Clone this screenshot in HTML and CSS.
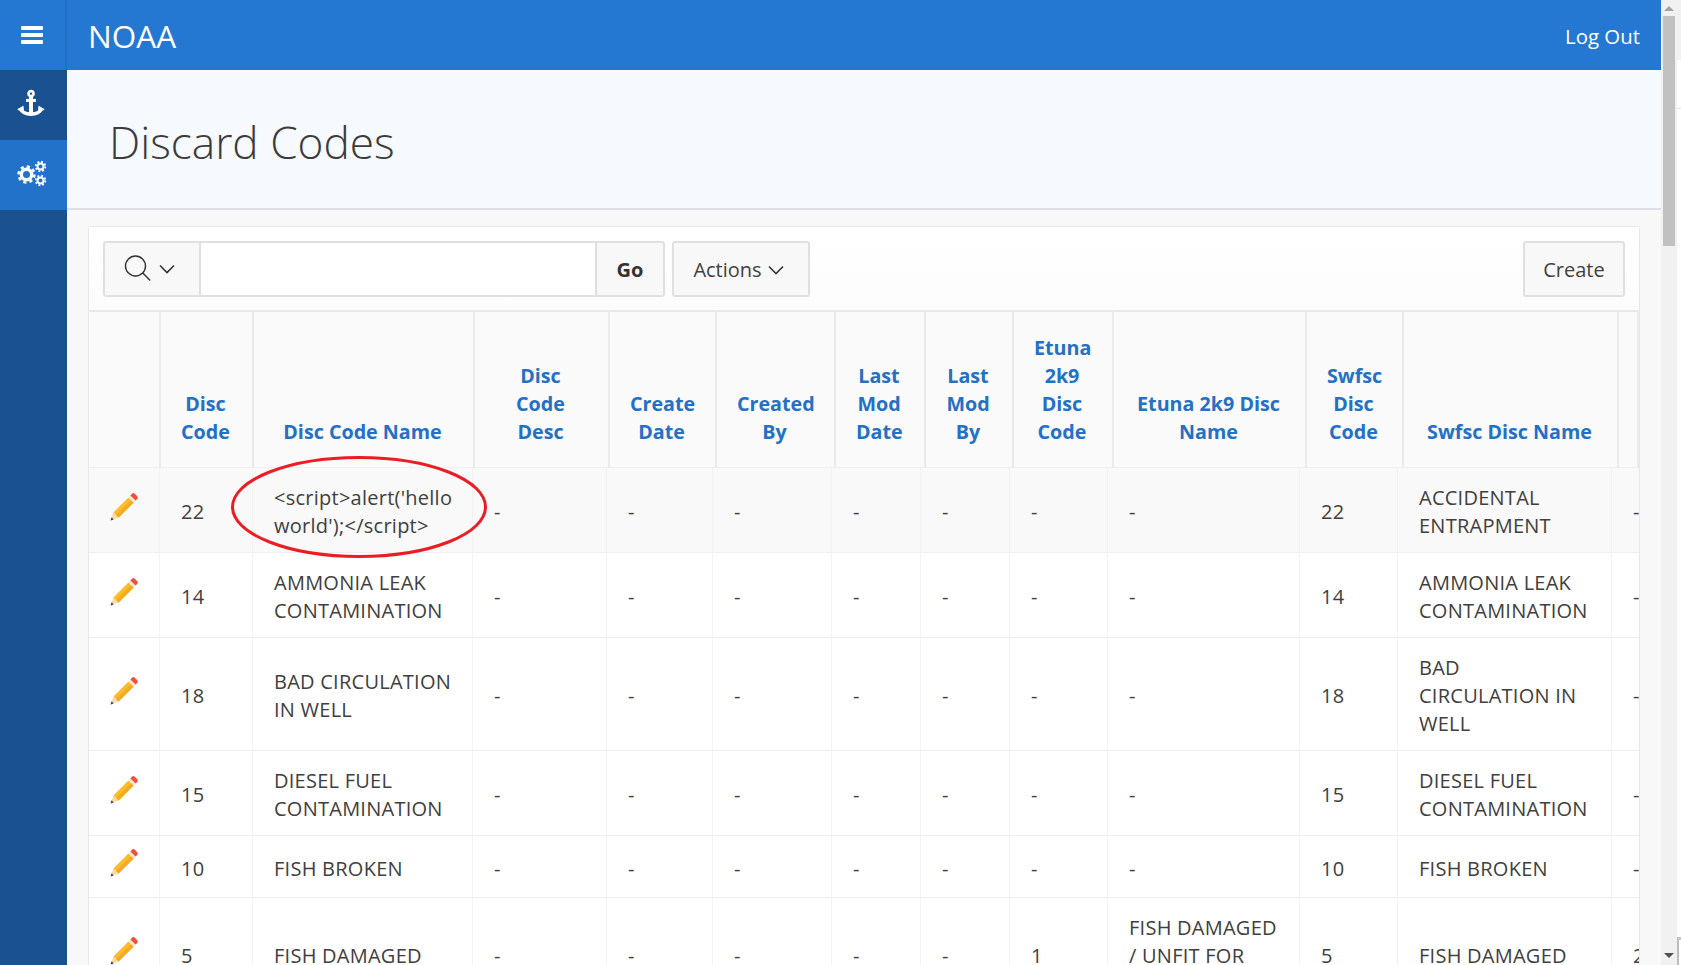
FILE: index.html
```html
<!DOCTYPE html>
<html lang="en">
<head>
<meta charset="utf-8">
<title>Discard Codes</title>
<link rel="stylesheet" href="styles.css">
</head>
<body>
<svg class="defs" width="0" height="0" aria-hidden="true">
  <symbol id="pencil" viewBox="0 0 30 30">
    <polygon points="1.5,28.5 4.4,20.4 9.6,25.6" fill="#f7dca6"/>
    <polygon points="1.5,28.5 2.6,25.3 4.7,27.4" fill="#34495e"/>
    <polygon points="4.4,20.4 19.4,5.4 24.6,10.6 9.6,25.6" fill="#fbbd2d"/>
    <polygon points="7,23 22,8 24.6,10.6 9.6,25.6" fill="#f5ab1f"/>
    <polygon points="19.4,5.4 21.4,3.4 26.6,8.6 24.6,10.6" fill="#f6e3cf"/>
    <path d="M21.4 3.4l1.6-1.6a2 2 0 0 1 2.8 0l2.4 2.4a2 2 0 0 1 0 2.8l-1.6 1.6z" fill="#ef4f3b"/>
  </symbol>
</svg>
<div class="shell">
  <div class="viewport">
    <header class="topbar">
      <button class="burger" aria-label="Menu">
        <span></span><span></span><span></span>
      </button>
      <div class="brand">NOAA</div>
      <a class="logout">Log Out</a>
    </header>
    <div class="under">
      <nav class="sidenav">
        <a class="navitem">
          <svg width="30" height="30" viewBox="0 0 30 30" fill="none" stroke="#fff">
            <circle cx="15" cy="4.6" r="2.5" stroke-width="2.6"/>
            <path d="M15 7v18" stroke-width="4"/>
            <path d="M10 11.4h10" stroke-width="3"/>
            <path d="M4.5 19c1 4 5.5 6.2 10.5 6.2s9.5-2.2 10.5-6.2" stroke-width="3.6"/>
            <path d="M1.8 20.4l5.4-3v5.4zM28.2 20.4l-5.4-3v5.4z" fill="#fff" stroke-width="1"/>
          </svg>
        </a>
        <a class="navitem navitem-active">
          <svg width="30" height="28" viewBox="0 0 30 28" fill="none" stroke="#fff">
            <circle cx="9.5" cy="14.5" r="5.2" stroke-width="3.4"/>
            <circle cx="9.5" cy="14.5" r="8" stroke-width="2.4" stroke-dasharray="3.2 3.08"/>
            <circle cx="23.5" cy="6.5" r="3" stroke-width="2"/>
            <circle cx="23.5" cy="6.5" r="4.8" stroke-width="1.8" stroke-dasharray="1.9 1.87"/>
            <circle cx="23.5" cy="20.5" r="3" stroke-width="2"/>
            <circle cx="23.5" cy="20.5" r="4.8" stroke-width="1.8" stroke-dasharray="1.9 1.87"/>
          </svg>
        </a>
      </nav>
      <main class="main">
        <div class="titlebar"><h1 class="title">Discard Codes</h1></div>
        <section class="content">
          <div class="panel">
            <div class="toolbar">
              <button class="btn btn-search" aria-label="Search">
                <svg width="30" height="30" viewBox="0 0 30 30" fill="none" stroke="#333" stroke-width="1.4">
                  <circle cx="12.5" cy="12" r="10"/>
                  <path d="M19.8 19l7.4 7.6"/>
                </svg>
                <svg class="chev" width="18" height="12" viewBox="0 0 18 12" fill="none" stroke="#333" stroke-width="1.6">
                  <path d="M2 2.5l7 7 7-7"/>
                </svg>
              </button>
              <input class="search" type="text" aria-label="Search">
              <button class="btn btn-go">Go</button>
              <button class="btn btn-actions">Actions
                <svg class="chev" width="18" height="12" viewBox="0 0 18 12" fill="none" stroke="#333" stroke-width="1.6">
                  <path d="M2 2.5l7 7 7-7"/>
                </svg>
              </button>
              <button class="btn btn-create">Create</button>
            </div>
            <div class="report">
              <table class="grid head">
                <colgroup>
                  <col class="h1"><col class="h2"><col class="h3"><col class="h4"><col class="h5"><col class="h6"><col class="h7"><col class="h8"><col class="h9"><col class="h10"><col class="h11"><col class="h12"><col class="h13">
                </colgroup>
                <thead>
                  <tr>
                    <th></th>
                    <th>Disc Code</th>
                    <th>Disc Code Name</th>
                    <th>Disc Code Desc</th>
                    <th>Create Date</th>
                    <th>Created By</th>
                    <th>Last Mod Date</th>
                    <th>Last Mod By</th>
                    <th>Etuna 2k9 Disc Code</th>
                    <th>Etuna 2k9 Disc Name</th>
                    <th>Swfsc Disc Code</th>
                    <th>Swfsc Disc Name</th>
                    <th></th>
                  </tr>
                </thead>
              </table>
              <table class="grid body">
                <colgroup>
                  <col class="b1"><col class="b2"><col class="b3"><col class="b4"><col class="b5"><col class="b6"><col class="b7"><col class="b8"><col class="b9"><col class="b10"><col class="b11"><col class="b12"><col class="b13">
                </colgroup>
                <tbody>
                  <tr class="hover">
                    <td class="edit"><svg class="pencil" width="30" height="30"><use href="#pencil"/></svg></td>
                    <td>22</td><td>&lt;script&gt;alert('hello world');&lt;/script&gt;</td>
                    <td>-</td><td>-</td><td>-</td><td>-</td><td>-</td><td>-</td><td>-</td>
                    <td>22</td><td>ACCIDENTAL ENTRAPMENT</td><td>-</td>
                  </tr>
                  <tr>
                    <td class="edit"><svg class="pencil" width="30" height="30"><use href="#pencil"/></svg></td>
                    <td>14</td><td>AMMONIA LEAK CONTAMINATION</td>
                    <td>-</td><td>-</td><td>-</td><td>-</td><td>-</td><td>-</td><td>-</td>
                    <td>14</td><td>AMMONIA LEAK CONTAMINATION</td><td>-</td>
                  </tr>
                  <tr>
                    <td class="edit"><svg class="pencil" width="30" height="30"><use href="#pencil"/></svg></td>
                    <td>18</td><td>BAD CIRCULATION IN WELL</td>
                    <td>-</td><td>-</td><td>-</td><td>-</td><td>-</td><td>-</td><td>-</td>
                    <td>18</td><td>BAD CIRCULATION IN WELL</td><td>-</td>
                  </tr>
                  <tr>
                    <td class="edit"><svg class="pencil" width="30" height="30"><use href="#pencil"/></svg></td>
                    <td>15</td><td>DIESEL FUEL CONTAMINATION</td>
                    <td>-</td><td>-</td><td>-</td><td>-</td><td>-</td><td>-</td><td>-</td>
                    <td>15</td><td>DIESEL FUEL CONTAMINATION</td><td>-</td>
                  </tr>
                  <tr>
                    <td class="edit"><svg class="pencil" width="30" height="30"><use href="#pencil"/></svg></td>
                    <td>10</td><td>FISH BROKEN</td>
                    <td>-</td><td>-</td><td>-</td><td>-</td><td>-</td><td>-</td><td>-</td>
                    <td>10</td><td>FISH BROKEN</td><td>-</td>
                  </tr>
                  <tr>
                    <td class="edit"><svg class="pencil" width="30" height="30"><use href="#pencil"/></svg></td>
                    <td>5</td><td>FISH DAMAGED</td>
                    <td>-</td><td>-</td><td>-</td><td>-</td><td>-</td><td>1</td><td>FISH DAMAGED / UNFIT FOR HUMAN USE</td>
                    <td>5</td><td>FISH DAMAGED</td><td>2</td>
                  </tr>
                </tbody>
              </table>
              <svg class="circle" width="260" height="106" viewBox="0 0 260 106" fill="none" aria-hidden="true">
                <ellipse cx="130" cy="53" rx="126.5" ry="49.5" stroke="#ec1c24" stroke-width="3"/>
              </svg>
            </div>
          </div>
        </section>
      </main>
    </div>
  </div>
  <div class="scrollbar">
    <span class="arrow arrow-up"></span>
    <span class="thumb"></span>
    <span class="arrow arrow-down"></span>
  </div>
  <div class="sliver">
    <span class="sliver-top"></span>
    <span class="sliver-row"></span>
    <span class="sliver-fill"></span>
    <span class="sliver-box"></span>
  </div>
</div>
</body>
</html>
```
FILE: styles.css
```css
* { box-sizing: border-box; }
html, body { margin: 0; height: 965px; overflow: hidden; background: #fff; }
body { font-family: "Open Sans", "Noto Sans", sans-serif; color: #404040; font-size: 20px; }
.defs { position: absolute; }

.shell { display: flex; height: 965px; }
.viewport { width: 1661px; display: flex; flex-direction: column; }

/* top bar */
.topbar { height: 70px; display: flex; align-items: center; background: #2578d2; color: #fff; flex: none; }
.burger { width: 67px; height: 70px; padding: 0 23px 0 21px; border: 0; border-right: 2px solid #2270c6; background: #2578d2; display: flex; flex-direction: column; gap: 3px; justify-content: center; }
.burger span { display: block; height: 4px; width: 22px; background: #fff; border-radius: 1px; }
.brand { margin-left: 21px; padding-top: 2px; font-size: 31.5px; line-height: 68px; }
.logout { margin-left: auto; margin-right: 21px; padding-top: 2px; font-size: 20.4px; line-height: 68px; }

.under { flex: 1; display: flex; min-height: 0; }
.sidenav { width: 67px; flex: none; background: #1a5190; }
.navitem { height: 70px; display: flex; align-items: center; justify-content: center; padding: 0 6px 2px 0; }
.navitem-active { background: #2272c9; padding: 0 4px 2px 0; }

/* main */
.main { flex: 1; min-width: 0; display: flex; flex-direction: column; background: #f8f8f8; }
.titlebar { height: 140px; flex: none; background: #f6f9fe; border-bottom: 2px solid #dde0e4; padding: 6px 42px 0; display: flex; align-items: center; }
.title { margin: 0; font-size: 44.2px; font-weight: 300; color: #3c3c3c; line-height: 60px; }
.content { flex: 1; padding: 16px 21px 0; min-height: 0; }
.panel { height: 100%; background: #fff; border: 1px solid #e8e8e8; border-bottom: 0; border-radius: 3px 3px 0 0; display: flex; flex-direction: column; }

/* toolbar */
.toolbar { height: 83px; flex: none; display: flex; align-items: flex-start; padding: 14px 14px 0 14px; background: linear-gradient(#fff, #fcfcfc); }
.btn { height: 56px; font: inherit; color: #404040; background: #f8f8f8; border: 2px solid #e0e0e0; border-radius: 3px; display: flex; align-items: center; justify-content: center; padding: 1px 0 0; }
.btn-search { width: 98px; border-radius: 3px 0 0 3px; gap: 5px; padding: 0 6px 0 0; }
.search { width: 394px; height: 56px; border: 2px solid #e0e0e0; border-left: 0; border-right: 0; background: #fff; }
.btn-go { width: 70px; font-weight: 700; border-radius: 0 3px 3px 0; color: #333; }
.btn-actions { width: 138px; margin-left: 7px; gap: 5px; padding-right: 4px; }
.btn-create { width: 102px; margin-left: auto; }

/* report */
.report { position: relative; flex: 1; min-height: 0; overflow: hidden; }
.grid { border-collapse: separate; border-spacing: 0; table-layout: fixed; line-height: 28px; }
.head { width: 1550px; background: #fafafa; }
.head th { height: 158px; padding: 0 22px 21px 20px; vertical-align: bottom; text-align: center; font-size: 19.7px; font-weight: 700; color: #2470c4; border-top: 2px solid #e8e8e8; border-right: 2px solid #ebebeb; border-bottom: 1px solid #f0f0f0; }
.h1 { width: 72px; } .h2 { width: 93px; } .h3 { width: 221px; } .h4 { width: 135px; }
.h5 { width: 107px; } .h6 { width: 119px; } .h7 { width: 90px; } .h8 { width: 88px; }
.h9 { width: 100px; } .h10 { width: 193px; } .h11 { width: 97px; } .h12 { width: 215px; } .h13 { width: 20px; }

.body { width: 1603px; }
.body td { height: 62px; padding: 16px 19px 12px 21px; vertical-align: middle; letter-spacing: .25px; border-right: 1px solid #f2f2f2; border-bottom: 1px solid #efefef; }
.hover td { background: #f9f9f9; }
.body .edit { padding: 0 0 7px; text-align: center; }
.pencil { display: block; margin: 0 auto; }
.b1 { width: 71px; } .b2 { width: 93px; } .b3 { width: 220px; } .b4 { width: 134px; }
.b5 { width: 106px; } .b6 { width: 119px; } .b7 { width: 89px; } .b8 { width: 89px; }
.b9 { width: 98px; } .b10 { width: 192px; } .b11 { width: 98px; } .b12 { width: 214px; } .b13 { width: 80px; }

.circle { position: absolute; left: 139.5px; top: 143.5px; }

/* fake browser scrollbar */
.scrollbar { width: 16px; flex: none; background: #f1f1f1; display: flex; flex-direction: column; align-items: center; padding-top: 6px; position: relative; }
.arrow { width: 0; height: 0; border-left: 5px solid transparent; border-right: 5px solid transparent; }
.arrow-up { border-bottom: 5px solid #a3a3a3; }
.thumb { width: 12px; height: 230px; margin-top: 5px; background: #c1c1c1; }
.arrow-down { border-top: 5px solid #505050; margin-top: auto; margin-bottom: 7px; }
.sliver { width: 4px; flex: none; display: flex; flex-direction: column; background: #fff; }
.sliver-top { height: 60px; background: #f1f1f1; }
.sliver-row { height: 49px; border-bottom: 1px solid #e4e4e4; }
.sliver-fill { flex: 1; }
.sliver-box { height: 28px; border-top: 3px solid #c8c8c8; border-left: 2px solid #bdbdbd; background: #fff; }
```
